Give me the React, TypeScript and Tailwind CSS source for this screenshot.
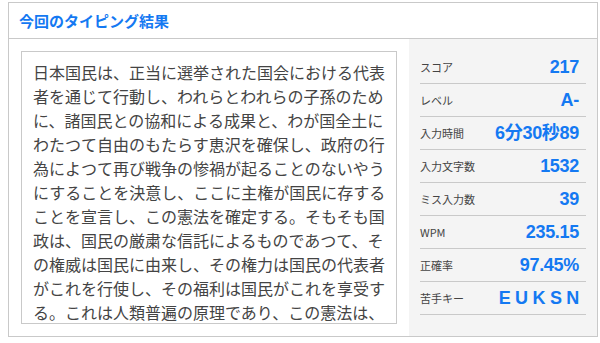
import React from "react";

const text =
  "日本国民は、正当に選挙された国会における代表者を通じて行動し、われらとわれらの子孫のために、諸国民との協和による成果と、わが国全土にわたつて自由のもたらす恵沢を確保し、政府の行為によつて再び戦争の惨禍が起ることのないやうにすることを決意し、ここに主権が国民に存することを宣言し、この憲法を確定する。そもそも国政は、国民の厳粛な信託によるものであつて、その権威は国民に由来し、その権力は国民の代表者がこれを行使し、その福利は国民がこれを享受する。これは人類普遍の原理であり、この憲法は、かかる原理に基くものである。われらは、これに反する一切の憲法、法令及び詔勅を排除する。";

const stats: [string, string][] = [
  ["スコア", "217"],
  ["レベル", "A-"],
  ["入力時間", "6分30秒89"],
  ["入力文字数", "1532"],
  ["ミス入力数", "39"],
  ["WPM", "235.15"],
  ["正確率", "97.45%"],
  ["苦手キー", "E U K S N"],
];

export default function App() {
  return (
    <div className="w-[600px] h-[343px] bg-white pt-[2px] pl-[8px]" style={{ fontFamily: '"Noto Sans CJK JP", "Noto Sans", sans-serif' }}>
      <div className="w-[590px] border border-[#c9c9c9] flex flex-col">
        <div className="h-[36px] border-b border-[#c9c9c9] flex items-center pl-[10px]">
          <span className="text-[15px] font-bold text-[#1479f2] leading-none">今回のタイピング結果</span>
        </div>
        <div className="flex h-[297px]">
          <div className="w-[400px] p-[12px]">
            <div className="h-[273px] border border-[#c9c9c9] overflow-hidden pl-[11px] pr-[9px] pt-[8px]">
              <p className="text-[16px] leading-[24px] text-[#444444] break-all">{text}</p>
            </div>
          </div>
          <div className="flex-1 bg-[#f4f4f4] px-[11px] pt-[12px]">
            {stats.map(([label, value]) => (
              <div key={label} className="h-[33px] border-b border-[#c9c9c9] flex items-center justify-between pr-[7px]">
                <span className="text-[11px] text-[#444444]" style={{ fontFamily: '"Noto Sans CJK JP", sans-serif' }}>{label}</span>
                <span
                  className="text-[18px] font-bold text-[#1479f2] leading-none tracking-[-0.3px]"
                  style={{ fontFamily: '"Liberation Sans", "Noto Sans CJK JP", sans-serif' }}
                >
                  {value}
                </span>
              </div>
            ))}
          </div>
        </div>
      </div>
    </div>
  );
}
